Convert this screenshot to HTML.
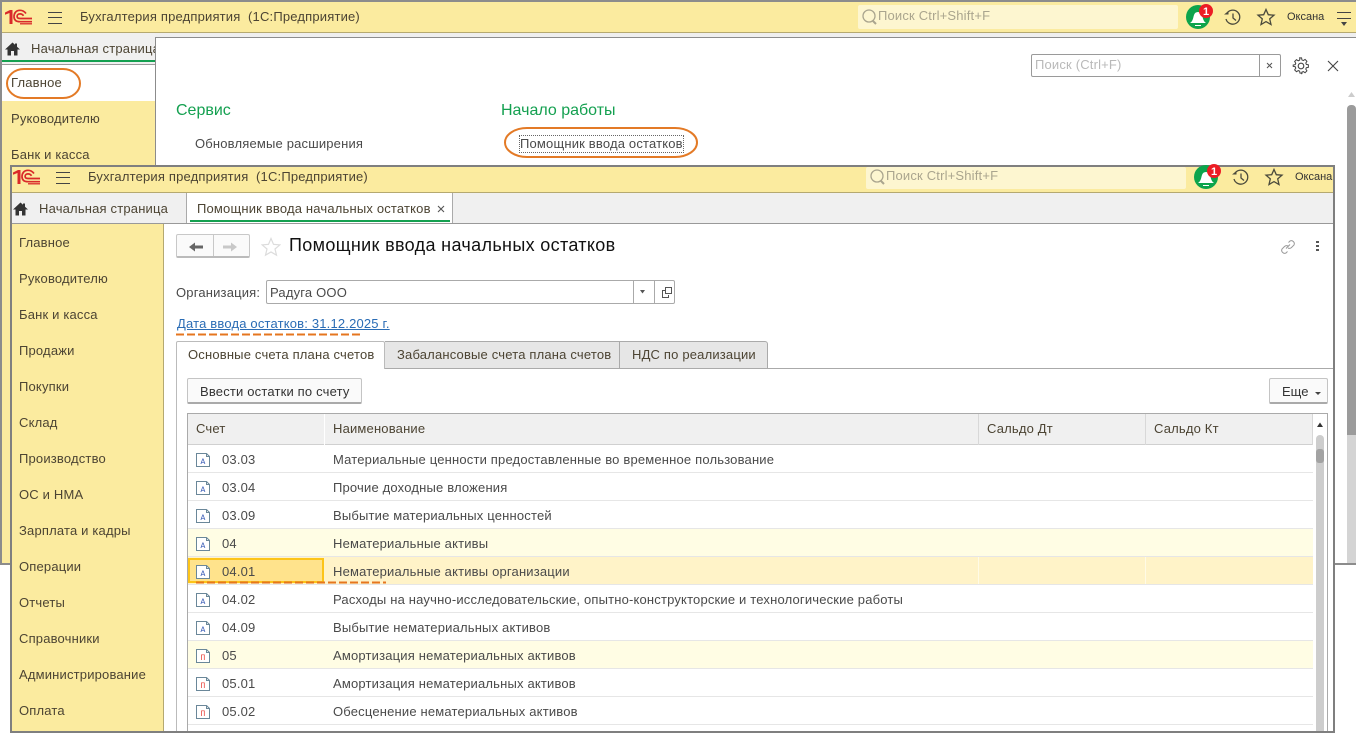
<!DOCTYPE html>
<html><head><meta charset="utf-8"><style>
html,body{margin:0;padding:0;background:#fff}
#p{position:relative;width:1356px;height:735px;overflow:hidden;background:#fff;font:13px "Liberation Sans",sans-serif;color:#4a4a4a;letter-spacing:.18px}
#p div,#p span.a,#p svg{position:absolute}
.t{white-space:nowrap;line-height:16px}
.hdr{left:0;top:0;width:1356px;height:31px;overflow:hidden}
.side{left:0;width:140px;white-space:nowrap;line-height:16px;color:#4c4433}
.row{left:188px;width:1125px;height:27px;border-bottom:1px solid #e6e6e6}
.row .c{left:34px;top:7px;white-space:nowrap;line-height:16px}
.row .n{left:145px;top:7px;white-space:nowrap;line-height:16px}
.row svg{left:8px;top:8px}
</style></head><body><div id="p">

<svg width="0" height="0" style="left:0;top:0"><defs>
<g id="doc"><path d="M.5.5h10l3 3v10H.5z" fill="#fff" stroke="#6a8799"/><path d="M10.500.5v3h3" fill="none" stroke="#6a8799"/></g>
<g id="hdrlogo"><path d="M5 12.500l5-2.500h2.500v14H9.500V13l-4.500 1.800z" fill="#d92a2a"/><path d="M26 13.500c-1.500-2-3.500-3.200-6-3.200-3.800 0-6 2.800-6 6.200s2.200 5.200 6 5.200h12" fill="none" stroke="#d92a2a" stroke-width="1.700"/><path d="M23.500 15.800c-.8-1.300-2-1.900-3.500-1.900-1.900 0-2.900 1.100-2.900 2.500s1 2.100 2.900 2.100h12" fill="none" stroke="#d92a2a" stroke-width="1.700"/><path d="M20 23.800h12" stroke="#d92a2a" stroke-width="1.300"/></g>
</defs></svg>

<!-- BACK WINDOW -->
<div style="left:0;top:0;width:1356px;height:565px;background:#fbeb9f;border-top:2px solid #8c8c8c;box-sizing:border-box;border-left:2px solid #8c8c8c"></div>
<div style="left:2px;top:32px;width:1354px;height:1px;background:#b5a970"></div>
<div style="left:2px;top:33px;width:1354px;height:5px;background:#efefef"></div>
<div style="left:2px;top:33px;width:153px;height:32px;background:#f0f0f0"></div>
<div style="left:2px;top:60px;width:153px;height:2px;background:#14a050"></div>
<div style="left:2px;top:64px;width:153px;height:1px;background:#999"></div>
<div style="left:2px;top:65px;width:153px;height:36px;background:#fff"></div>
<div style="left:155px;top:37px;width:1201px;height:527px;background:#fff;border-top:1px solid #8c8c8c;border-left:1px solid #8c8c8c;box-sizing:border-box"></div>
<div style="left:0;top:563px;width:1356px;height:2px;background:#8c8c8c"></div>

<div class="hdr" style="top:0;height:32px">
<svg width="40" height="32" style="left:0;top:0"><use href="#hdrlogo"/></svg>
<div style="left:48px;top:12px;width:14px;height:1px;background:#444"></div>
<div style="left:48px;top:17px;width:14px;height:1px;background:#444"></div>
<div style="left:48px;top:23px;width:14px;height:1px;background:#444"></div>
<div class="t" style="left:80px;top:9px;color:#4c4433;word-spacing:0">Бухгалтерия предприятия &nbsp;(1С:Предприятие)</div>
<div style="left:858px;top:5px;width:320px;height:24px;background:#fdf6d0;border-radius:2px"></div>
<svg width="20" height="20" style="left:860px;top:7px"><circle cx="9" cy="9" r="6" fill="none" stroke="#aaa58e" stroke-width="1.300"/><path d="M13 14l3 3" stroke="#aaa58e" stroke-width="2"/></svg>
<div class="t" style="left:878px;top:8px;color:#aaa58e">Поиск Ctrl+Shift+F</div>
<svg width="28" height="28" style="left:1184px;top:3px"><circle cx="14" cy="14" r="12" fill="#0da44c"/><path d="M6 20c3-2 3-5 4-8 .6-2 2-3 4-3s3.400 1 4 3c1 3 1 6 4 8z" fill="#fff"/><path d="M11 22h6v1h-6z" fill="#fff"/></svg>
<svg width="16" height="16" style="left:1198px;top:3px"><circle cx="8" cy="8" r="7" fill="#ec1c24"/><text x="5" y="12" font-family="Liberation Sans" font-size="11" font-weight="bold" fill="#fff">1</text></svg>
<svg width="20" height="20" style="left:1223px;top:8px"><path d="M3.500 6A7 7 0 1 1 3 11" fill="none" stroke="#4a4a3c" stroke-width="1.300"/><path d="M1 6.500h4.500V3z" fill="#4a4a3c"/><path d="M10 5.500v4.500l3 2.500" fill="none" stroke="#4a4a3c" stroke-width="1.300"/></svg>
<svg width="20" height="20" style="left:1256px;top:7px"><path d="M10 2.500l2.300 5.200 5.700.5-4.300 3.700 1.300 5.600L10 14.600l-5 2.900 1.300-5.600L2 8.200l5.700-.5z" fill="none" stroke="#4a4a3c" stroke-width="1.300"/></svg>
<div class="t" style="left:1287px;top:9px;font-size:11px;color:#333;letter-spacing:0;font-weight:500">Оксана</div>
<div style="left:1337px;top:12px;width:14px;height:1px;background:#444"></div>
<div style="left:1337px;top:18px;width:14px;height:1px;background:#444"></div>
<svg width="14" height="6" style="left:1337px;top:21px"><path d="M4 1h6L7 5z" fill="#444"/></svg>
</div>

<svg width="15" height="14" style="left:5px;top:42px"><path d="M7.500 .5L0 7.500H2.500V13.500h3.500V9h3v4.500h3.500V7.500H15L12 4.700V1.500H10V2.800z" fill="#333"/></svg>
<div class="t" style="left:31px;top:41px;color:#4c4433;width:124px;overflow:hidden">Начальная страница</div>
<div class="side" style="left:11px;top:75px">Главное</div>
<div class="side" style="left:11px;top:111px">Руководителю</div>
<div class="side" style="left:11px;top:147px">Банк и касса</div>

<div class="t" style="left:176px;top:102px;font-size:16px;color:#14a050;letter-spacing:0;line-height:18px">Сервис</div>
<div class="t" style="left:501px;top:102px;font-size:16px;color:#14a050;letter-spacing:0;line-height:18px">Начало работы</div>
<div class="t" style="left:195px;top:136px">Обновляемые расширения</div>
<div class="t" style="left:520px;top:136px;outline:1px dotted #666;outline-offset:0">Помощник ввода остатков</div>

<div style="left:1031px;top:54px;width:248px;height:21px;border:1px solid #9a9a9a;border-radius:2px;background:#fff"></div>
<div style="left:1259px;top:55px;width:1px;height:21px;background:#9a9a9a"></div>
<div class="t" style="left:1035px;top:57px;color:#b9b9b9">Поиск (Ctrl+F)</div>
<svg width="8" height="8" style="left:1266px;top:62px"><path d="M1 1l5 5M6 1L1 6" stroke="#555" stroke-width="1"/></svg>
<svg width="18" height="18" style="left:1292px;top:57px"><circle cx="9" cy="9" r="2.800" fill="none" stroke="#444" stroke-width="1.100"/><path d="M7.600 1.500h2.800l.4 2.200 1.500.7 1.900-1.200 2 2-1.200 1.900.6 1.500 2.200.4v2.800l-2.200.4-.6 1.500 1.200 1.900-2 2-1.900-1.200-1.500.6-.4 2.200" transform="translate(0,-.5) scale(.92)" fill="none" stroke="#444" stroke-width="1.100"/><path d="M10.400 16.500H7.600l-.4-2.200-1.500-.6-1.900 1.200-2-2 1.200-1.900-.6-1.500-2.200-.4V7.600l2.200-.4.600-1.500L1.800 3.800l2-2 1.900 1.200 1.500-.7.400-2.200" transform="translate(1,1) scale(.92)" fill="none" stroke="#444" stroke-width="1.100"/></svg>
<svg width="12" height="12" style="left:1327px;top:60px"><path d="M1 1l10 10M11 1L1 11" stroke="#444" stroke-width="1.100"/></svg>

<svg width="10" height="8" style="left:1347px;top:91px"><path d="M4.500 1L8 6H1z" fill="#ccc"/></svg>
<div style="left:1347px;top:105px;width:9px;height:330px;background:#9b9b9b;border-radius:4px 4px 0 0"></div>
<div style="left:1347px;top:435px;width:9px;height:128px;background:#d4d4d4"></div>

<svg width="84" height="40" style="left:3px;top:64px"><rect x="4" y="5" width="73" height="29" rx="17" ry="14.500" fill="none" stroke="#e37a26" stroke-width="2"/></svg>
<svg width="200" height="38" style="left:501px;top:124px"><rect x="4" y="4" width="192" height="29" rx="22" ry="14.500" fill="none" stroke="#e37a26" stroke-width="2"/></svg>

<!-- FRONT WINDOW -->
<div style="left:10px;top:165px;width:1325px;height:568px;background:#fff;border:2px solid #7f7f7f;box-sizing:border-box"></div>
<div style="left:12px;top:167px;width:1321px;height:25px;background:#fbeb9f"></div>
<div style="left:12px;top:192px;width:1321px;height:1px;background:#b5a970"></div>
<div style="left:12px;top:193px;width:1321px;height:30px;background:#f0f0f0"></div>
<div style="left:12px;top:223px;width:1321px;height:1px;background:#999"></div>
<div style="left:186px;top:193px;width:267px;height:30px;background:#fff;border-left:1px solid #aaa;border-right:1px solid #aaa;box-sizing:border-box"></div>
<div style="left:190px;top:220px;width:260px;height:2px;background:#14a050"></div>
<div style="left:12px;top:224px;width:151px;height:507px;background:#fbeb9f"></div>
<div style="left:163px;top:224px;width:1px;height:507px;background:#b5a970"></div>

<div class="hdr" style="left:8px;top:160px;width:1325px;height:32px">
<svg width="40" height="32" style="left:0;top:0"><use href="#hdrlogo"/></svg>
<div style="left:48px;top:12px;width:14px;height:1px;background:#444"></div>
<div style="left:48px;top:17px;width:14px;height:1px;background:#444"></div>
<div style="left:48px;top:23px;width:14px;height:1px;background:#444"></div>
<div class="t" style="left:80px;top:9px;color:#4c4433">Бухгалтерия предприятия &nbsp;(1С:Предприятие)</div>
<div style="left:858px;top:7px;width:320px;height:22px;background:#fdf6d0;border-radius:2px"></div>
<svg width="20" height="20" style="left:860px;top:7px"><circle cx="9" cy="9" r="6" fill="none" stroke="#aaa58e" stroke-width="1.300"/><path d="M13 14l3 3" stroke="#aaa58e" stroke-width="2"/></svg>
<div class="t" style="left:878px;top:8px;color:#aaa58e">Поиск Ctrl+Shift+F</div>
<svg width="28" height="28" style="left:1184px;top:3px"><circle cx="14" cy="14" r="12" fill="#0da44c"/><path d="M6 20c3-2 3-5 4-8 .6-2 2-3 4-3s3.400 1 4 3c1 3 1 6 4 8z" fill="#fff"/><path d="M11 22h6v1h-6z" fill="#fff"/></svg>
<svg width="16" height="16" style="left:1198px;top:3px"><circle cx="8" cy="8" r="7" fill="#ec1c24"/><text x="5" y="12" font-family="Liberation Sans" font-size="11" font-weight="bold" fill="#fff">1</text></svg>
<svg width="20" height="20" style="left:1223px;top:8px"><path d="M3.500 6A7 7 0 1 1 3 11" fill="none" stroke="#4a4a3c" stroke-width="1.300"/><path d="M1 6.500h4.500V3z" fill="#4a4a3c"/><path d="M10 5.500v4.500l3 2.500" fill="none" stroke="#4a4a3c" stroke-width="1.300"/></svg>
<svg width="20" height="20" style="left:1256px;top:7px"><path d="M10 2.500l2.300 5.200 5.700.5-4.300 3.700 1.300 5.600L10 14.600l-5 2.900 1.300-5.600L2 8.200l5.700-.5z" fill="none" stroke="#4a4a3c" stroke-width="1.300"/></svg>
<div class="t" style="left:1287px;top:9px;font-size:11px;color:#333;letter-spacing:0">Оксана</div>
</div>

<svg width="15" height="14" style="left:13px;top:202px"><path d="M7.500 .5L0 7.500H2.500V13.500h3.500V9h3v4.500h3.500V7.500H15L12 4.700V1.500H10V2.800z" fill="#333"/></svg>
<div class="t" style="left:39px;top:201px;color:#4c4433">Начальная страница</div>
<div class="t" style="left:197px;top:201px;color:#4c4433">Помощник ввода начальных остатков</div>
<svg width="9" height="9" style="left:437px;top:205px"><path d="M1 1l6 6M7 1L1 7" stroke="#555" stroke-width="1.100"/></svg>

<div class="side" style="left:19px;top:235px">Главное</div>
<div class="side" style="left:19px;top:271px">Руководителю</div>
<div class="side" style="left:19px;top:307px">Банк и касса</div>
<div class="side" style="left:19px;top:343px">Продажи</div>
<div class="side" style="left:19px;top:379px">Покупки</div>
<div class="side" style="left:19px;top:415px">Склад</div>
<div class="side" style="left:19px;top:451px">Производство</div>
<div class="side" style="left:19px;top:487px">ОС и НМА</div>
<div class="side" style="left:19px;top:523px">Зарплата и кадры</div>
<div class="side" style="left:19px;top:559px">Операции</div>
<div class="side" style="left:19px;top:595px">Отчеты</div>
<div class="side" style="left:19px;top:631px">Справочники</div>
<div class="side" style="left:19px;top:667px">Администрирование</div>
<div class="side" style="left:19px;top:703px">Оплата</div>

<!-- form head -->
<div style="left:176px;top:234px;width:72px;height:21px;border:1px solid #c8c8c8;border-bottom:2px solid #bbb;border-radius:2px;background:#fafafa"></div>
<div style="left:213px;top:235px;width:1px;height:21px;background:#c8c8c8"></div>
<svg width="16" height="12" style="left:188px;top:241px"><path d="M15 4.500H7V1.500L1 6l6 4.500V7.500h8z" fill="#666"/></svg>
<svg width="16" height="12" style="left:222px;top:241px"><path d="M1 4.500h8V1.500L15 6 9 10.500V7.500H1z" fill="#c8c8c8"/></svg>
<svg width="20" height="20" style="left:261px;top:237px"><path d="M10 1.500l2.500 5.800 6.300.6-4.800 4.100 1.500 6.200L10 15l-5.500 3.200L6 12 1.200 7.900l6.300-.6z" fill="none" stroke="#dcdcdc" stroke-width="1.200"/></svg>
<div class="t" style="left:289px;top:234px;font-size:18px;line-height:22px;color:#111;letter-spacing:.34px">Помощник ввода начальных остатков</div>
<svg width="18" height="18" style="left:1279px;top:238px"><path d="M7 10.500l4-4M9.500 4.500l1.500-1.500a3 3 0 0 1 4 4l-2.500 2.500a3 3 0 0 1-3.500.5M8.500 13.500L7 15a3 3 0 0 1-4-4l2.500-2.500A3 3 0 0 1 9 8" fill="none" stroke="#999" stroke-width="1"/></svg>
<div style="left:1316px;top:241px;width:3px;height:2px;background:#555"></div>
<div style="left:1316px;top:245px;width:3px;height:2px;background:#555"></div>
<div style="left:1316px;top:249px;width:3px;height:2px;background:#555"></div>

<div class="t" style="left:176px;top:285px">Организация:</div>
<div style="left:266px;top:280px;width:407px;height:22px;border:1px solid #aaa;border-radius:2px"></div>
<div style="left:633px;top:281px;width:1px;height:22px;background:#aaa"></div>
<div style="left:654px;top:281px;width:1px;height:22px;background:#aaa"></div>
<div class="t" style="left:270px;top:285px">Радуга ООО</div>
<svg width="8" height="5" style="left:639px;top:290px"><path d="M1 0h5L3.500 3.500z" fill="#555"/></svg>
<svg width="12" height="12" style="left:661px;top:287px"><path d="M4.500.5h6v6h-6z" fill="none" stroke="#555"/><path d="M4.500 3.500h-3v7h6V8" fill="none" stroke="#555"/></svg>

<div class="t" style="left:177px;top:316px;color:#2a6cb5;text-decoration:underline">Дата ввода остатков: 31.12.2025 г.</div>
<svg width="190" height="3" style="left:176px;top:333px"><path d="M0 1.500h185" stroke="#e5761f" stroke-width="2" stroke-dasharray="8 3"/></svg>

<!-- tabs -->
<div style="left:176px;top:368px;width:1157px;height:1px;background:#aaa"></div>
<div style="left:176px;top:368px;width:1px;height:363px;background:#bbb"></div>
<div style="left:176px;top:341px;width:209px;height:28px;background:#fff;border:1px solid #bbb;border-bottom:0;border-radius:2px 2px 0 0;box-sizing:border-box"></div>
<div style="left:385px;top:341px;width:235px;height:28px;background:#e6e6e6;border:1px solid #aaa;box-sizing:border-box;border-left:0"></div>
<div style="left:620px;top:341px;width:148px;height:28px;background:#e6e6e6;border:1px solid #aaa;box-sizing:border-box;border-left:0;border-radius:0 3px 0 0"></div>
<div class="t" style="left:188px;top:347px;color:#4c4433">Основные счета плана счетов</div>
<div class="t" style="left:397px;top:347px;color:#4c4433">Забалансовые счета плана счетов</div>
<div class="t" style="left:632px;top:347px;color:#4c4433">НДС по реализации</div>

<div style="left:187px;top:378px;width:173px;height:23px;border:1px solid #c4c4c4;border-bottom:2px solid #aaa;border-radius:2px;background:#fafafa"></div>
<div class="t" style="left:200px;top:384px;color:#333">Ввести остатки по счету</div>
<div style="left:1269px;top:378px;width:57px;height:23px;border:1px solid #c4c4c4;border-bottom:2px solid #aaa;border-radius:2px;background:#fafafa"></div>
<div class="t" style="left:1282px;top:384px;color:#333;letter-spacing:0">Еще</div>
<svg width="7" height="4" style="left:1315px;top:392px"><path d="M0 0h6L3 3z" fill="#444"/></svg>

<!-- table -->
<div style="left:187px;top:413px;width:1141px;height:318px;border:1px solid #aaa;border-bottom:0;box-sizing:border-box"></div>
<div style="left:188px;top:414px;width:1125px;height:30px;background:#f0f0f0;border-bottom:1px solid #d0d0d0"></div>
<div style="left:324px;top:414px;width:1px;height:31px;background:#fff"></div>
<div style="left:978px;top:414px;width:1px;height:31px;background:#d8d8d8"></div>
<div style="left:1145px;top:414px;width:1px;height:31px;background:#d8d8d8"></div>
<div style="left:1312px;top:414px;width:1px;height:31px;background:#d8d8d8"></div>
<div class="t" style="left:196px;top:421px;color:#4c4433">Счет</div>
<div class="t" style="left:333px;top:421px;color:#4c4433">Наименование</div>
<div class="t" style="left:987px;top:421px;color:#4c4433">Сальдо Дт</div>
<div class="t" style="left:1154px;top:421px;color:#4c4433">Сальдо Кт</div>

<svg width="8" height="6" style="left:1316px;top:422px"><path d="M4 .5L7 5H1z" fill="#333"/></svg>
<div style="left:1316px;top:435px;width:8px;height:296px;background:#cdcdcd;border-radius:4px 4px 0 0"></div>
<div style="left:1316px;top:449px;width:8px;height:14px;background:#a3a3a3;border-radius:3px"></div>

<div class="row" style="top:445px"><svg width="14" height="15"><use href="#doc"/><text x="4.500" y="11" font-size="8" font-family="Liberation Mono" fill="#3558b5" letter-spacing="0">А</text></svg><div class="c">03.03</div><div class="n">Материальные ценности предоставленные во временное пользование</div></div>
<div class="row" style="top:473px"><svg width="14" height="15"><use href="#doc"/><text x="4.500" y="11" font-size="8" font-family="Liberation Mono" fill="#3558b5" letter-spacing="0">А</text></svg><div class="c">03.04</div><div class="n">Прочие доходные вложения</div></div>
<div class="row" style="top:501px"><svg width="14" height="15"><use href="#doc"/><text x="4.500" y="11" font-size="8" font-family="Liberation Mono" fill="#3558b5" letter-spacing="0">А</text></svg><div class="c">03.09</div><div class="n">Выбытие материальных ценностей</div></div>
<div class="row" style="top:529px;background:#fffde4"><svg width="14" height="15"><use href="#doc"/><text x="4.500" y="11" font-size="8" font-family="Liberation Mono" fill="#3558b5" letter-spacing="0">А</text></svg><div class="c">04</div><div class="n">Нематериальные активы</div></div>
<div class="row" style="top:557px;background:#fff3c8"><div style="left:0;top:1px;width:136px;height:25px;background:#ffe38c;border:2px solid #fcc419;box-sizing:border-box"></div><div style="left:790px;top:0;width:1px;height:27px;background:#fffbe6"></div><div style="left:957px;top:0;width:1px;height:27px;background:#fffbe6"></div><svg width="14" height="15"><use href="#doc"/><text x="4.500" y="11" font-size="8" font-family="Liberation Mono" fill="#3558b5" letter-spacing="0">А</text></svg><div class="c">04.01</div><div class="n">Нематериальные активы организации</div></div>
<svg width="195" height="3" style="left:196px;top:581px"><path d="M0 1.500h190" stroke="#e5761f" stroke-width="2" stroke-dasharray="8 3"/></svg>
<div class="row" style="top:585px"><svg width="14" height="15"><use href="#doc"/><text x="4.500" y="11" font-size="8" font-family="Liberation Mono" fill="#3558b5" letter-spacing="0">А</text></svg><div class="c">04.02</div><div class="n">Расходы на научно-исследовательские, опытно-конструкторские и технологические работы</div></div>
<div class="row" style="top:613px"><svg width="14" height="15"><use href="#doc"/><text x="4.500" y="11" font-size="8" font-family="Liberation Mono" fill="#3558b5" letter-spacing="0">А</text></svg><div class="c">04.09</div><div class="n">Выбытие нематериальных активов</div></div>
<div class="row" style="top:641px;background:#fffde4"><svg width="14" height="15"><use href="#doc"/><text x="4.500" y="11" font-size="8" font-family="Liberation Mono" fill="#e8403a" letter-spacing="0">П</text></svg><div class="c">05</div><div class="n">Амортизация нематериальных активов</div></div>
<div class="row" style="top:669px"><svg width="14" height="15"><use href="#doc"/><text x="4.500" y="11" font-size="8" font-family="Liberation Mono" fill="#e8403a" letter-spacing="0">П</text></svg><div class="c">05.01</div><div class="n">Амортизация нематериальных активов</div></div>
<div class="row" style="top:697px"><svg width="14" height="15"><use href="#doc"/><text x="4.500" y="11" font-size="8" font-family="Liberation Mono" fill="#e8403a" letter-spacing="0">П</text></svg><div class="c">05.02</div><div class="n">Обесценение нематериальных активов</div></div>
</div></body></html>
